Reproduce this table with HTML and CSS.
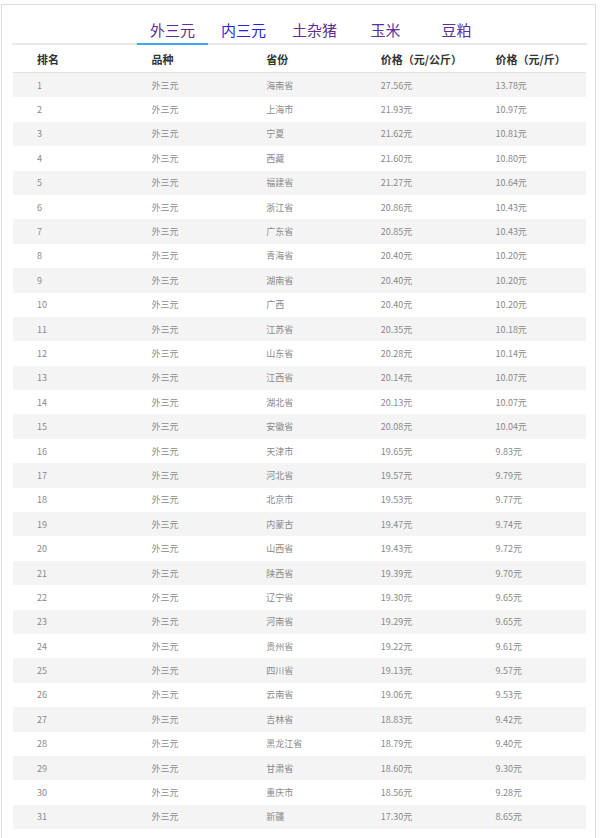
FILE: index.html
```html
<!DOCTYPE html>
<html lang="zh-CN">
<head>
<meta charset="utf-8">
<title>猪价排行</title>
<link rel="stylesheet" href="styles.css">
</head>
<body>
<div class="frame">
  <div class="tabs">
    <a class="tab tab-visited active">外三元</a>
    <a class="tab tab-link">内三元</a>
    <a class="tab tab-visited">土杂猪</a>
    <a class="tab tab-visited">玉米</a>
    <a class="tab tab-visited">豆粕</a>
  </div>
  <div class="table">
    <div class="row head"><span>排名</span><span>品种</span><span>省份</span><span>价格（元/公斤）</span><span>价格（元/斤）</span></div>
    <div class="row"><span>1</span><span>外三元</span><span>海南省</span><span>27.56元</span><span>13.78元</span></div>
    <div class="row"><span>2</span><span>外三元</span><span>上海市</span><span>21.93元</span><span>10.97元</span></div>
    <div class="row"><span>3</span><span>外三元</span><span>宁夏</span><span>21.62元</span><span>10.81元</span></div>
    <div class="row"><span>4</span><span>外三元</span><span>西藏</span><span>21.60元</span><span>10.80元</span></div>
    <div class="row"><span>5</span><span>外三元</span><span>福建省</span><span>21.27元</span><span>10.64元</span></div>
    <div class="row"><span>6</span><span>外三元</span><span>浙江省</span><span>20.86元</span><span>10.43元</span></div>
    <div class="row"><span>7</span><span>外三元</span><span>广东省</span><span>20.85元</span><span>10.43元</span></div>
    <div class="row"><span>8</span><span>外三元</span><span>青海省</span><span>20.40元</span><span>10.20元</span></div>
    <div class="row"><span>9</span><span>外三元</span><span>湖南省</span><span>20.40元</span><span>10.20元</span></div>
    <div class="row"><span>10</span><span>外三元</span><span>广西</span><span>20.40元</span><span>10.20元</span></div>
    <div class="row"><span>11</span><span>外三元</span><span>江苏省</span><span>20.35元</span><span>10.18元</span></div>
    <div class="row"><span>12</span><span>外三元</span><span>山东省</span><span>20.28元</span><span>10.14元</span></div>
    <div class="row"><span>13</span><span>外三元</span><span>江西省</span><span>20.14元</span><span>10.07元</span></div>
    <div class="row"><span>14</span><span>外三元</span><span>湖北省</span><span>20.13元</span><span>10.07元</span></div>
    <div class="row"><span>15</span><span>外三元</span><span>安徽省</span><span>20.08元</span><span>10.04元</span></div>
    <div class="row"><span>16</span><span>外三元</span><span>天津市</span><span>19.65元</span><span>9.83元</span></div>
    <div class="row"><span>17</span><span>外三元</span><span>河北省</span><span>19.57元</span><span>9.79元</span></div>
    <div class="row"><span>18</span><span>外三元</span><span>北京市</span><span>19.53元</span><span>9.77元</span></div>
    <div class="row"><span>19</span><span>外三元</span><span>内蒙古</span><span>19.47元</span><span>9.74元</span></div>
    <div class="row"><span>20</span><span>外三元</span><span>山西省</span><span>19.43元</span><span>9.72元</span></div>
    <div class="row"><span>21</span><span>外三元</span><span>陕西省</span><span>19.39元</span><span>9.70元</span></div>
    <div class="row"><span>22</span><span>外三元</span><span>辽宁省</span><span>19.30元</span><span>9.65元</span></div>
    <div class="row"><span>23</span><span>外三元</span><span>河南省</span><span>19.29元</span><span>9.65元</span></div>
    <div class="row"><span>24</span><span>外三元</span><span>贵州省</span><span>19.22元</span><span>9.61元</span></div>
    <div class="row"><span>25</span><span>外三元</span><span>四川省</span><span>19.13元</span><span>9.57元</span></div>
    <div class="row"><span>26</span><span>外三元</span><span>云南省</span><span>19.06元</span><span>9.53元</span></div>
    <div class="row"><span>27</span><span>外三元</span><span>吉林省</span><span>18.83元</span><span>9.42元</span></div>
    <div class="row"><span>28</span><span>外三元</span><span>黑龙江省</span><span>18.79元</span><span>9.40元</span></div>
    <div class="row"><span>29</span><span>外三元</span><span>甘肃省</span><span>18.60元</span><span>9.30元</span></div>
    <div class="row"><span>30</span><span>外三元</span><span>重庆市</span><span>18.56元</span><span>9.28元</span></div>
    <div class="row"><span>31</span><span>外三元</span><span>新疆</span><span>17.30元</span><span>8.65元</span></div>
  </div>
</div>
</body>
</html>
```
FILE: styles.css
```css
html, body {
  margin: 0;
  padding: 0;
  background: #ffffff;
}
body {
  font-family: "Noto Sans CJK SC", "Microsoft YaHei", sans-serif;
}
.frame {
  margin: 4px 0 0 1px;
  width: 593px;
  height: 850px;
  border: 1px solid #dedede;
  border-bottom: none;
  overflow: hidden;
}
.tabs {
  display: flex;
  margin: 0 8px 0 10px;
  padding-left: 125px;
  height: 38px;
  border-bottom: 2px solid #e8e8e8;
  align-items: flex-end;
}
.tab {
  display: block;
  width: 71px;
  text-align: center;
  font-size: 15px;
  line-height: 20px;
  padding: 15px 0 3px;
  margin-bottom: -2px;
  border-bottom: 2px solid transparent;
  cursor: pointer;
}
.tab-visited { color: #5f2e96; }
.tab-link { color: #2a1ee6; }
.tab.active { border-bottom-color: #42a6ee; }
.table {
  margin: 0 9px 0 11px;
}
.row {
  display: grid;
  grid-template-columns: repeat(5, 1fr);
  height: 24.4px;
  align-items: center;
  font-size: 9px;
  color: #8a8a8a;
}
.row span {
  padding-left: 24px;
  white-space: nowrap;
}
.row:nth-child(even) {
  background: #f4f4f4;
}
.row.head {
  height: 27px;
  border-bottom: 1px solid #e2e2e2;
  font-size: 11px;
  font-weight: bold;
  color: #333333;
}
```
